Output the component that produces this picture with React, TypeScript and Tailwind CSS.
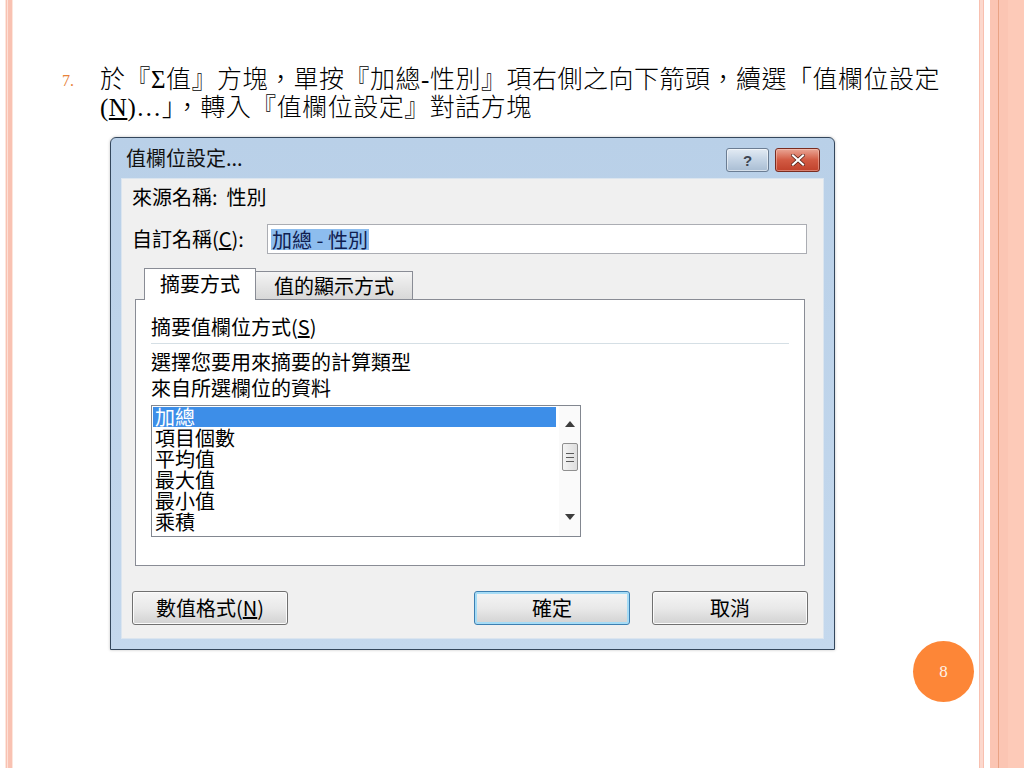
import React from "react";

const serif = { fontFamily: '"Liberation Serif", "Noto Sans CJK TC", serif' };
const ui = { fontFamily: '"Noto Sans CJK TC", "Liberation Sans", sans-serif' };

function WinButton({ children, focused }: { children: React.ReactNode; focused?: boolean }) {
  return (
    <div
      className={
        "w-[156px] h-[34px] rounded-[3px] border flex items-center justify-center text-[20px] text-black bg-linear-to-b from-[#f5f5f5] via-[#e9e9e9] to-[#d2d2d2] " +
        (focused ? "border-[#3c7fb1] shadow-[inset_0_0_0_2px_#a6dcf6]" : "border-[#707070] shadow-[inset_0_0_0_1px_#fbfbfb]")
      }
    >
      {children}
    </div>
  );
}

export default function App() {
  const items = ["項目個數", "平均值", "最大值", "最小值", "乘積"];
  return (
    <div className="w-[1024px] h-[768px] bg-white flex overflow-hidden">
      {/* left decorative stripe */}
      <div className="flex h-full shrink-0">
        <div className="w-[5px] bg-white" />
        <div className="w-[1px] bg-[#fde6dc]" />
        <div className="w-[1px] bg-[#f8c2b3]" />
        <div className="w-[1px] bg-[#fde0d6]" />
        <div className="w-[4px] bg-[#f9c2b2]" />
        <div className="w-[1px] bg-[#fde6dc]" />
      </div>

      <main className="w-[966px] shrink-0 flex flex-col relative">
        {/* bullet text */}
        <div className="flex pt-[66px] pl-[49px]">
          <div className="w-[38px] text-[16px] leading-[28px] pt-[1px] text-[#e8833a]" style={serif}>
            7.
          </div>
          <div className="text-[25px] leading-[28px] tracking-[0.5px] font-light text-black whitespace-nowrap" style={serif}>
            於『<span className="font-normal">Σ</span>值』方塊，單按『加總<span className="font-normal">-</span>性別』項右側之向下箭頭，續選「值欄位設定
            <br />
            <span className="font-normal">(<span className="underline">N</span>)…</span>」，轉入『值欄位設定』對話方塊
          </div>
        </div>

        {/* dialog */}
        <div
          className="mt-[15px] ml-[97px] w-[725px] h-[513px] border border-[#34475c] rounded-t-[6px] flex flex-col bg-linear-to-b from-[#b9d0e8] to-[#c4d8ed] shadow-[0_0_3px_rgba(0,0,0,0.25)]"
          style={ui}
        >
          {/* title bar */}
          <div className="h-[40px] flex items-start justify-between">
            <div className="pl-[15px] pt-[8px] text-[20px] leading-[24px] text-[#111]">值欄位設定...</div>
            <div className="flex gap-[6px] pt-[10px] pr-[14px]">
              <div className="w-[43px] h-[24px] rounded-[3px] border border-[#6b7d93] bg-linear-to-b from-[#e3ebf4] via-[#c3d3e4] to-[#a9bdd3] shadow-[inset_0_0_0_1px_rgba(255,255,255,0.5)] flex items-center justify-center">
                <span className="text-[15px] font-bold text-[#3d4652] leading-none" style={{ fontFamily: '"Liberation Sans", sans-serif' }}>?</span>
              </div>
              <div className="w-[45px] h-[24px] rounded-[3px] border border-[#7a2c20] bg-linear-to-b from-[#e9a595] via-[#d25a43] to-[#c0412b] shadow-[inset_0_0_0_1px_rgba(255,220,210,0.4)] flex items-center justify-center">
                <svg width="14" height="12" viewBox="0 0 14 12">
                  <path d="M2 1.5 L12 10.5 M12 1.5 L2 10.5" stroke="#4a1a12" strokeWidth="3.6" strokeLinecap="square" />
                  <path d="M2 1.5 L12 10.5 M12 1.5 L2 10.5" stroke="#ffffff" strokeWidth="2.2" strokeLinecap="square" />
                </svg>
              </div>
            </div>
          </div>

          {/* client area */}
          <div className="flex-1 px-[10px] pb-[10px]">
            <div className="h-full bg-[#f0f0f0] border border-[#dbe5ef] flex flex-col text-[20px] text-black">
              <div className="mt-[6px] h-[24px] leading-[24px] pl-[10px]">
                來源名稱:&nbsp;&nbsp;性別
              </div>

              <div className="mt-[15px] h-[30px] flex items-center">
                <div className="w-[145px] pl-[10px] leading-[24px]">
                  自訂名稱(<span className="underline">C</span>):
                </div>
                <div className="w-[540px] h-[30px] bg-white border border-[#abadb3] flex items-center pl-[3px]">
                  <span className="bg-[#8dbdee] text-[#102050] leading-[21px] px-[1px]">加總 - 性別</span>
                </div>
              </div>

              {/* tabs */}
              <div className="mt-[14px] ml-[13px] w-[670px]">
                <div className="h-[31px] flex items-end pl-[9px]">
                  <div className="relative z-10 -mb-px w-[112px] h-[32px] bg-white border border-[#898c95] border-b-0 flex items-center justify-center leading-[24px] pb-[2px]">
                    摘要方式
                  </div>
                  <div className="w-[157px] h-[28px] border border-[#898c95] border-l-0 border-b-0 bg-linear-to-b from-[#f4f4f4] to-[#d8d8d8] flex items-center justify-center leading-[24px]">
                    值的顯示方式
                  </div>
                </div>
                <div className="h-[267px] bg-white border border-[#898c95] flex flex-col">
                  <div className="pt-[15px] pl-[15px] leading-[24px]">
                    摘要值欄位方式(<span className="underline">S</span>)
                  </div>
                  <div className="mt-[4px] ml-[15px] mr-[15px] h-px bg-[#d5dfe5]" />
                  <div className="mt-[5px] pl-[15px] leading-[26px]">
                    選擇您要用來摘要的計算類型
                    <br />
                    來自所選欄位的資料
                  </div>
                  {/* listbox */}
                  <div className="mt-[4px] ml-[15px] w-[430px] h-[132px] border border-[#828790] flex bg-white">
                    <div className="flex-1 flex flex-col">
                      <div className="mt-px mx-px mr-[3px] h-[20px] leading-[20px] bg-[#3d8ee8] text-white pl-[2px]">
                        加總
                      </div>
                      {items.map((t) => (
                        <div key={t} className="h-[21px] leading-[21px] pl-[3px] text-black">
                          {t}
                        </div>
                      ))}
                    </div>
                    <div className="w-[21px] flex flex-col items-center bg-[#fafafa]">
                      <div className="h-[36px] flex items-center justify-center">
                        <svg width="10" height="6" viewBox="0 0 10 6">
                          <path d="M0 6 L5 0 L10 6 Z" fill="#3c3c3c" />
                        </svg>
                      </div>
                      <div className="mt-[1px] w-[16px] h-[28px] rounded-[2px] border border-[#8f8f8f] bg-linear-to-r from-[#f4f4f4] to-[#dedede] flex flex-col items-center justify-center gap-[3px]">
                        <div className="w-[8px] h-px bg-[#5a5a5a]" />
                        <div className="w-[8px] h-px bg-[#5a5a5a]" />
                        <div className="w-[8px] h-px bg-[#5a5a5a]" />
                      </div>
                      <div className="flex-1" />
                      <div className="h-[38px] flex items-center justify-center">
                        <svg width="10" height="6" viewBox="0 0 10 6">
                          <path d="M0 0 L10 0 L5 6 Z" fill="#3c3c3c" />
                        </svg>
                      </div>
                    </div>
                  </div>
                </div>
              </div>

              {/* buttons */}
              <div className="mt-[25px] flex pl-[10px]">
                <WinButton>
                  數值格式(<span className="underline">N</span>)
                </WinButton>
                <div className="ml-[186px] flex gap-[22px]">
                  <WinButton focused>確定</WinButton>
                  <WinButton>取消</WinButton>
                </div>
              </div>
            </div>
          </div>
        </div>

        {/* page number */}
        <div className="absolute left-[900px] top-[641px] w-[61px] h-[61px] rounded-full bg-[#fd8637] flex items-center justify-center">
          <span className="text-[17px] text-[#fff2e6]" style={serif}>8</span>
        </div>
      </main>

      {/* right decorative border */}
      <div className="flex h-full shrink-0">
        <div className="w-[1px] bg-[#f8c0b0]" />
        <div className="w-[3px] bg-[#fcd8cd]" />
        <div className="w-[1px] bg-[#f8c0b0]" />
        <div className="w-[6px] bg-white" />
        <div className="w-[8px] bg-[#fbc5b3]" />
        <div className="w-[1px] bg-[#e9a384]" />
        <div className="w-[9px] bg-[#fbc5b3]" />
        <div className="w-[16px] bg-[#fdcab8]" />
      </div>
    </div>
  );
}
